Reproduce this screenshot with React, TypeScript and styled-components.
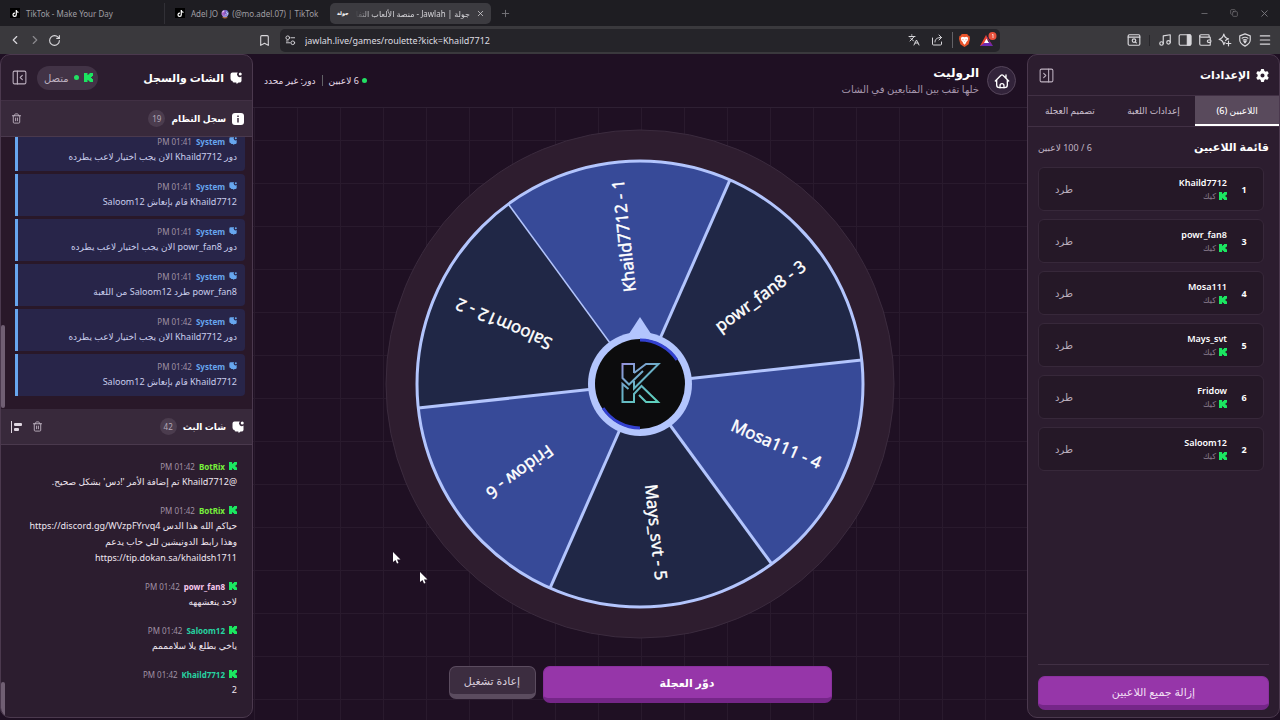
import React from "react";
import styled, { createGlobalStyle } from "styled-components";
import {
  Bookmark, ChevronLeft, ChevronRight, Copy, Languages, Menu, Minus, Music, PanelLeftClose,
  PanelRightClose, Plus, RotateCw, Trash2, Wallet, X,
} from "lucide-react";
import { FaGear, FaTiktok } from "react-icons/fa6";

const GlobalStyle = createGlobalStyle`
  * { box-sizing: border-box; }
  body { margin: 0; background: #1f1023; color: #fff; font-family: "Noto Sans", "DejaVu Sans", sans-serif; }
  button { font: inherit; color: inherit; background: none; border: 0; padding: 0; cursor: pointer; }
  h1, h2, h3, p, ul { margin: 0; padding: 0; }
  ul { list-style: none; }
  svg { display: block; flex: none; }
`;

const Window = styled.div`
  height: 100vh;
  display: flex;
  flex-direction: column;
`;

/* Browser frame */
const TabStrip = styled.div`
  height: 26px;
  flex: none;
  display: flex;
  align-items: center;
  background: #1e1d22;
  color: #a09fa4;
  font-size: 8px;
`;
const Tab = styled.button<{ $last?: boolean }>`
  width: 165px;
  height: 21px;
  padding: 0 10px;
  display: flex;
  align-items: center;
  gap: 6px;
  white-space: nowrap;
  border-right: ${(p) => (p.$last ? "0" : "1px solid #313036")};
`;
const ActiveTab = styled.div`
  width: 161px;
  height: 21px;
  padding: 0 6px 0 7px;
  display: flex;
  align-items: center;
  gap: 6px;
  border-radius: 5px;
  background: #3c3b40;
  color: #d5d4d8;
`;
const Favicon = styled.span`
  width: 10px;
  height: 10px;
  display: grid;
  place-items: center;
  background: #000;
  color: #fff;
`;
const WordIcon = styled.span`
  flex: none;
  font-size: 5px;
  font-weight: 700;
  color: #fff;
`;
const ActiveTitle = styled.span`
  flex: 1;
  min-width: 0;
  overflow: hidden;
  white-space: nowrap;
  mask-image: linear-gradient(to right, transparent, #000 16px);
`;
const NewTab = styled.button`
  margin-left: 9px;
  color: #77767b;
`;
const WindowControls = styled.div`
  margin-left: auto;
  padding-right: 10px;
  display: flex;
  align-items: center;
  gap: 21px;
  color: #7b7a7f;
`;
const Toolbar = styled.div`
  height: 28px;
  flex: none;
  display: grid;
  grid-template-columns: 280px minmax(0, 1fr) 280px;
  align-items: center;
  background: #3a393d;
  color: #d9d8dc;
`;
const NavButtons = styled.div`
  padding: 0 9px 0 8px;
  display: flex;
  gap: 6px;
`;
const ToolButton = styled.button<{ $dim?: boolean; $end?: boolean }>`
  opacity: ${(p) => (p.$dim ? 0.5 : 1)};
  margin-left: ${(p) => (p.$end ? "auto" : "0")};
`;
const UrlBar = styled.div`
  height: 23px;
  padding: 0 3px 0 5px;
  display: flex;
  align-items: center;
  gap: 9px;
  border-radius: 5px;
  background: #252429;
`;
const UrlInput = styled.input`
  flex: 1;
  min-width: 0;
  padding: 0;
  border: 0;
  outline: 0;
  background: none;
  color: #dddce0;
  font: 9px "Noto Sans", sans-serif;
`;
const Divider = styled.span`
  width: 1px;
  height: 11px;
  background: #626166;
`;
const UrlActions = styled.div`
  display: flex;
  align-items: center;
  gap: 11px;
`;
const BraveActions = styled.div`
  padding-left: 6px;
  display: flex;
  align-items: center;
  gap: 10px;
  border-left: 1px solid #626166;
`;
const Extensions = styled.div`
  padding-right: 8px;
  display: flex;
  justify-content: flex-end;
  align-items: center;
  gap: 6px;
`;
const ExtensionDivider = styled(Divider)`
  margin: 0 2px;
  background: #27262a;
`;

/* Game page */
const Game = styled.div`
  flex: 1;
  min-height: 0;
  display: grid;
  grid-template-columns: 253px minmax(0, 1fr) 253px;
  font-size: 10px;
`;
const Panel = styled.aside`
  min-height: 0;
  margin-bottom: 2px;
  display: flex;
  flex-direction: column;
  overflow: hidden;
  border: 1px solid #4b394e;
  border-radius: 10px;
  background: #2c1d2f;
`;
const PanelHeader = styled.header<{ $tall?: boolean }>`
  height: ${(p) => (p.$tall ? 46 : 41)}px;
  flex: none;
  padding: 0 10px;
  display: flex;
  align-items: center;
  justify-content: space-between;
  border-bottom: 1px solid #413044;
`;
const PanelTitle = styled.h2`
  display: flex;
  align-items: center;
  gap: 6px;
  font-size: 11px;
  line-height: 20px;
`;
const Tools = styled.div`
  display: flex;
  align-items: center;
  gap: 9px;
  color: #bdb1c0;
`;
const Connection = styled.span`
  height: 24px;
  padding: 0 5px 0 7px;
  display: flex;
  align-items: center;
  gap: 5px;
  border-radius: 12px;
  background: #423346;
`;
const Dot = styled.i`
  width: 5px;
  height: 5px;
  border-radius: 50%;
  background: #22e063;
`;

const SectionHeader = styled.header`
  height: 36px;
  flex: none;
  padding: 0 8px;
  display: flex;
  align-items: center;
  gap: 6px;
  border-bottom: 1px solid #4a394d;
  background: #38293b;
`;
const SectionTitle = styled.h3`
  font-size: 9px;
`;
const Count = styled.span`
  min-width: 17px;
  height: 17px;
  padding: 0 4px;
  border-radius: 9px;
  background: #4b3c4e;
  color: #b5a9b8;
  font-size: 8px;
  line-height: 17px;
`;
const SectionTools = styled.div`
  margin-right: auto;
  padding-left: 2px;
  display: flex;
  gap: 9px;
  color: #bdb1c0;
`;
const Log = styled.div<{ $system?: boolean }>`
  position: relative;
  flex: ${(p) => (p.$system ? "0 1 272px" : "1 1 0")};
  min-height: 0;
  padding: ${(p) => (p.$system ? "0 7px 13px 14px" : "0 15px 19px")};
  display: flex;
  flex-direction: column;
  justify-content: flex-end;
  gap: ${(p) => (p.$system ? 3 : 12)}px;
  overflow: hidden;
  background: ${(p) => (p.$system ? "#291829" : "transparent")};
`;
const ScrollThumb = styled.i<{ $size: number }>`
  position: absolute;
  left: 0;
  bottom: 1px;
  width: 4px;
  height: ${(p) => p.$size}px;
  border-radius: 2px;
  background: #705f73;
`;
const SystemEntry = styled.article`
  flex: none;
  height: 42px;
  padding: 4px 8px;
  border-left: 3px solid #67a6ee;
  border-radius: 0 4px 4px 0;
  background: #282549;
`;
const ChatEntry = styled.article`
  flex: none;
`;
const Meta = styled.div`
  height: 16px;
  display: flex;
  align-items: center;
  gap: 4px;
  font-size: 8px;
`;
const Sender = styled.strong<{ $color: string }>`
  color: ${(p) => p.$color};
`;
const Time = styled.time`
  color: #a091a4;
`;
const Message = styled.p<{ $soft?: boolean }>`
  font-size: 9px;
  line-height: 16px;
  white-space: pre-line;
  color: ${(p) => (p.$soft ? "#c9cdec" : "#efe6f0")};
`;
const EmoteRow = styled.div`
  height: 16px;
  flex: none;
  padding: 0 2px;
  display: flex;
  align-items: center;
  gap: 10px;
`;
const Emote = styled.i`
  width: 12px;
  height: 12px;
  border: 2px solid #4a3b4e;
  border-radius: 50%;
  background: #170d1a;
`;

/* Centre stage */
const Stage = styled.main`
  position: relative;
  min-width: 0;
  min-height: 0;
  display: flex;
  flex-direction: column;
  background-color: #1f1023;
`;
const StageHeader = styled.header`
  height: 54px;
  flex: none;
  padding: 0 11px;
  display: flex;
  align-items: center;
  gap: 8px;
  border-bottom: 1px solid #2e2033;
  background: #1f1023;
`;
const HomeLink = styled.a`
  width: 29px;
  height: 29px;
  display: grid;
  place-items: center;
  border: 1px solid #55455a;
  border-radius: 50%;
  background: #32233a;
  color: #fff;
`;
const StageTitle = styled.h1`
  font-size: 12px;
  line-height: 16px;
`;
const Subtitle = styled.p`
  font-size: 10px;
  line-height: 16px;
  color: #a696ac;
`;
const Status = styled.div`
  margin-right: auto;
  display: flex;
  align-items: center;
  gap: 6px;
  font-size: 9px;
  color: #e4dae7;
`;
const StatusItem = styled.span`
  display: flex;
  align-items: center;
  gap: 3px;
`;
const Board = styled.div`
  flex: 1;
  min-height: 0;
  padding: 21px 20px 17px;
  display: flex;
  flex-direction: column;
  align-items: center;
  justify-content: space-between;
  background-image:
    linear-gradient(#291a2d 1px, transparent 1px),
    linear-gradient(90deg, #291a2d 1px, transparent 1px);
  background-size: 43px 43px;
  background-position: 0 32px, 44px 0;
`;
const WheelArt = styled.svg`
  width: 100%;
  max-width: 510px;
  min-height: 0;
  flex: 0 1 510px;
`;
const Actions = styled.div`
  width: 100%;
  max-width: 383px;
  display: flex;
  align-items: flex-start;
  gap: 7px;
`;
const ActionButton = styled.button<{ $primary?: boolean }>`
  flex: ${(p) => (p.$primary ? "1" : "0 0 87px")};
  height: ${(p) => (p.$primary ? 37 : 33)}px;
  border: 1px solid ${(p) => (p.$primary ? "#8a319e" : "#5b4c5f")};
  border-bottom: 5px solid ${(p) => (p.$primary ? "#752688" : "#5b4c5f")};
  border-radius: 7px;
  background: ${(p) => (p.$primary ? "#9636a9" : "#3c2d40")};
  font-size: ${(p) => (p.$primary ? 11 : 11)}px;
  font-weight: ${(p) => (p.$primary ? 700 : 400)};
  color: ${(p) => (p.$primary ? "#fff" : "#d9cedc")};
`;
const Pointer = styled.svg<{ $x: number; $y: number }>`
  position: absolute;
  left: ${(p) => p.$x}px;
  top: ${(p) => p.$y}px;
`;

/* Settings panel */
const Tabs = styled.nav`
  height: 31px;
  flex: none;
  display: grid;
  grid-template-columns: repeat(3, 1fr);
  border-bottom: 1px solid #413044;
`;
const SettingsTab = styled.button<{ $active?: boolean }>`
  font-size: 9px;
  font-weight: 500;
  white-space: nowrap;
  color: ${(p) => (p.$active ? "#fff" : "#c9bdcc")};
  background: ${(p) => (p.$active ? "#594a5c" : "transparent")};
  border-bottom: 2px solid ${(p) => (p.$active ? "#fff" : "transparent")};
`;
const PlayersHeader = styled.div`
  height: 40px;
  flex: none;
  padding: 0 10px;
  display: flex;
  align-items: center;
  justify-content: space-between;
`;
const Capacity = styled.span`
  font-size: 9px;
  color: #c0b4c4;
`;
const PlayerList = styled.ul`
  flex: 1;
  min-height: 0;
  margin: 0 10px;
  padding-right: 5px;
  display: flex;
  flex-direction: column;
  gap: 8px;
  overflow: hidden;
  border-bottom: 1px solid #413044;
`;
const PlayerCard = styled.li`
  height: 44px;
  flex: none;
  padding: 0 10px 0 16px;
  display: flex;
  align-items: center;
  gap: 8px;
  border: 1px solid #37283a;
  border-radius: 6px;
  background: #251827;
`;
const Seat = styled.b`
  width: 18px;
  text-align: center;
  font-size: 9px;
`;
const PlayerName = styled.div`
  font-size: 9px;
  font-weight: 600;
  line-height: 14px;
`;
const Platform = styled.div`
  display: flex;
  align-items: center;
  gap: 3px;
  font-size: 8px;
  line-height: 12px;
  color: #8b7d8f;
`;
const KickOut = styled.button`
  margin-right: auto;
  font-size: 10px;
  color: #b9adbc;
`;
const PanelFooter = styled.footer`
  padding: 11px 10px 7px;
`;
const ClearButton = styled(ActionButton)`
  width: 100%;
  height: 34px;
  font-weight: 400;
  color: #f1dff4;
`;

const KickMark = ({ size = 9 }: { size?: number }) => (
  <svg width={size} height={size} viewBox="0 0 9 9" fill="#1be660" aria-hidden="true">
    <path d="M0 0h3.500v2H4.500V1h1V0H9v3H8v1H7v1h1v1h1v3H5.500V8h-1V7h-1v2H0z" />
  </svg>
);

const ChatMark = ({ size = 12, color = "#fff" }: { size?: number; color?: string }) => (
  <svg width={size} height={size} viewBox="0 0 24 24" aria-hidden="true">
    <path fill={color} d="M5 1h10.500a5.500 5.500 0 0 0 7.500 8V18a4 4 0 0 1-4 3h-2l-3.500 3-1-3H8a3 3 0 0 1-3-3l-3-1-1-4V5a4 4 0 0 1 4-4z" />
    <circle cx="20.500" cy="4" r="3" fill={color} />
  </svg>
);

const InfoMark = () => (
  <svg width="12" height="12" viewBox="0 0 12 12" aria-hidden="true">
    <rect width="12" height="12" rx="3" fill="#fff" />
    <path d="M6 2.500v1.500M6 5v4.500" stroke="#38293b" strokeWidth="1.500" />
  </svg>
);

const HomeMark = () => (
  <svg width="16" height="16" viewBox="0 0 24 24" fill="none" stroke="#fff" strokeWidth="2" strokeLinecap="round" strokeLinejoin="round" aria-hidden="true">
    <path d="M2 12 10.500 3.500a2 2 0 0 1 3 0L22 12M4 10.500V18a4 4 0 0 0 4 4h8a4 4 0 0 0 4-4v-7.500M18 7V3" />
    <path d="M9 22v-3a3 3 0 0 1 6 0v3" />
  </svg>
);

const AlignMark = () => (
  <svg width="12" height="12" viewBox="0 0 12 12" fill="#e0d7e2" aria-hidden="true">
    <rect width="1" height="12" />
    <rect x="3" y="2" width="8" height="3" rx="1" />
    <rect x="3" y="7" width="5" height="3" rx="1" />
  </svg>
);

const BraveMark = () => (
  <svg width="11" height="13" viewBox="0 0 12 14" aria-hidden="true">
    <path d="M3 0h6l1 1.500 1.500.5L12 5l-1.500 6L6 14l-4.500-3L0 5l.5-3L2 1.500z" fill="#e9542b" />
    <path d="M2 4l2-1 2 .5L8 3l2 1-.5 3L8 8.500 7.500 10 6 11.500 4.500 10 4 8.500 2.500 7z" fill="#fff" />
    <path d="M3.500 5.500l1.500.5-.5 1zM8.500 5.500 7 6l.5 1zM5.500 8h1L6 9z" fill="#e9542b" />
  </svg>
);

const RewardsMark = () => (
  <svg width="17" height="16" viewBox="0 0 17 16" aria-hidden="true">
    <path d="M6 3 0 14h4l4-7z" fill="#e8442f" />
    <path d="M0 14h13l-3-4H6z" fill="#6a2ab0" />
    <path d="M6 3l7 11-3-3-3-5z" fill="#9c2480" />
    <path d="M6.500 6.500 4 11h5z" fill="#fff" />
    <circle cx="12.500" cy="4" r="4" fill="#e8513c" />
    <path d="M12 3l1-.8V6" stroke="#fff" strokeWidth=".7" fill="none" />
  </svg>
);

const LineIcon = styled.svg`
  fill: none;
  stroke: currentColor;
  stroke-width: 2;
  stroke-linecap: round;
  stroke-linejoin: round;
`;

const ShieldMark = () => (
  <LineIcon width="14" height="14" viewBox="0 0 24 24" aria-hidden="true">
    <path d="M12 1.500 21 5v7c0 5-4 8-9 10.500C7 20 3 17 3 12V5z" />
    <path d="M7 9c3-2 7-2 10 0M9 12c2-1 4-1 6 0" />
    <path d="m10 14 2 3 2-3z" fill="currentColor" />
  </LineIcon>
);
const SiteSettingsMark = () => (
  <LineIcon width="11" height="11" viewBox="0 0 24 24" aria-hidden="true">
    <circle cx="6" cy="6" r="4" /><path d="M13 6h8M3 13h4" />
    <circle cx="17" cy="17" r="4" /><path d="M3 17h8" />
  </LineIcon>
);
const ShareMark = () => (
  <LineIcon width="12" height="12" viewBox="0 0 24 24" aria-hidden="true">
    <path d="M3 8v12a2 2 0 0 0 2 2h14a2 2 0 0 0 2-2v-4" />
    <path d="M8 16c0-6 4-9 13-9M16 2l5 5-5 5" />
  </LineIcon>
);
const TabSearchMark = () => (
  <LineIcon width="14" height="14" viewBox="0 0 24 24" aria-hidden="true">
    <rect x="2" y="3" width="20" height="18" rx="2" /><path d="M2 7h20" />
    <circle cx="12" cy="13" r="3" /><path d="m14 15 2 2" />
  </LineIcon>
);
const SidebarMark = () => (
  <LineIcon width="14" height="14" viewBox="0 0 24 24" aria-hidden="true">
    <rect x="2" y="3" width="20" height="18" rx="2" />
    <path d="M16 3h4a2 2 0 0 1 2 2v14a2 2 0 0 1-2 2h-4z" fill="currentColor" />
  </LineIcon>
);
const AssistantMark = () => (
  <LineIcon width="14" height="14" viewBox="0 0 24 24" aria-hidden="true">
    <path d="M10 2c1 5 3 7 8 8-2 .5-4 1.500-5 3M10 2C9 7 7 9 2 11c5 1 7 4 8 9 .5-2 1-3 2-4" />
    <path d="M18 14v8M14 18h8" />
  </LineIcon>
);

const slices = ["Khaild7712 - 1", "powr_fan8 - 3", "Mosa111 - 4", "Mays_svt - 5", "Fridow - 6", "Saloom12 - 2"];
const startAngle = -96.2;
const at = (deg: number, r: number) => {
  const a = (deg * Math.PI) / 180;
  return `${(Math.cos(a) * r).toFixed(2)} ${(Math.sin(a) * r).toFixed(2)}`;
};

const Wheel = () => (
  <WheelArt viewBox="-255 -255 510 510" role="img" aria-label="عجلة الروليت" direction="ltr">
    <defs>
      <linearGradient id="logo" gradientUnits="userSpaceOnUse" x1="-17" y1="-20" x2="12" y2="18">
        <stop offset="0" stopColor="#9494dc" />
        <stop offset=".5" stopColor="#68b2c6" />
        <stop offset="1" stopColor="#5fd0bd" />
      </linearGradient>
    </defs>
    <circle r="254" fill="#2e1d2f" stroke="#3b2b3e" />
    {slices.map((label, i) => {
      const mid = startAngle + i * 60;
      return (
        <path key={label} d={`M0 0L${at(mid - 30, 223)}A223 223 0 0 1 ${at(mid + 30, 223)}Z`} fill={i % 2 ? "#202746" : "#374a98"} />
      );
    })}
    {slices.map((label, i) => (
      <path key={label} d={`M0 0L${at(startAngle - 30 + i * 60, 223)}`} stroke="#b3c5fd" strokeWidth={i === 0 ? 1.5 : 3} />
    ))}
    <circle r="223" fill="none" stroke="#b3c5fd" strokeWidth="3" />
    {slices.map((label, i) => (
      <text key={label} transform={`rotate(${startAngle + i * 60})`} x="149" y="6" textAnchor="middle" fill="#fff" stroke="#fff" strokeWidth=".4" fontSize="17">
        {label}
      </text>
    ))}
    <path d="M0-67-15-44h30z" fill="#b3c5fd" />
    <circle r="52" fill="#b3c5fd" />
    <circle r="45" fill="#0c0c0d" />
    <path d={`M0-44A44 44 0 0 1 ${at(-33, 44)}M0 44A44 44 0 0 1 ${at(147, 44)}`} fill="none" stroke="#3341d0" strokeWidth="3" />
    <g fill="none" stroke="url(#logo)" strokeWidth="2">
      <path d="M-6-11V-20H-17.500V-6L-11 .5 3-13" />
      <path d="M-6-11 6-20H18.500L-6 4.500V-3" />
      <path d="M-11.500 5-17.500 0V18H-6V10L1.500 2 18 18H6L-1 11" />
    </g>
  </WheelArt>
);

const system = [
  { time: "01:41 PM", text: "دور Khaild7712 الان يجب اختيار لاعب يطرده" },
  { time: "01:41 PM", text: "Khaild7712 قام بإنعاش Saloom12" },
  { time: "01:41 PM", text: "دور powr_fan8 الان يجب اختيار لاعب يطرده" },
  { time: "01:41 PM", text: "powr_fan8 طرد Saloom12 من اللعبة" },
  { time: "01:42 PM", text: "دور Khaild7712 الان يجب اختيار لاعب يطرده" },
  { time: "01:42 PM", text: "Khaild7712 قام بإنعاش Saloom12" },
];
const chat = [
  { name: "BotRix", color: "#78f03c", text: "@Khaild7712 تم إضافة الأمر '!دس' بشكل صحيح." },
  { name: "BotRix", color: "#78f03c", text: "حياكم الله هذا الدس https://discord.gg/WVzpFYrvq4\nوهذا رابط الدونيشين للي حاب يدعم\nhttps://tip.dokan.sa/khaildsh1711" },
  { name: "powr_fan8", color: "#f6c9ee", text: "لاحد ينعشههه" },
  { name: "Saloom12", color: "#27d3a2", text: "ياخي بطلع يلا سلامممم" },
  { name: "Khaild7712", color: "#27d3a2", text: "2" },
];
const players: [number, string][] = [[1, "Khaild7712"], [3, "powr_fan8"], [4, "Mosa111"], [5, "Mays_svt"], [6, "Fridow"], [2, "Saloom12"]];

const BrowserFrame = () => (
  <>
    <TabStrip>
      <Tab><Favicon><FaTiktok size={7} /></Favicon>TikTok - Make Your Day</Tab>
      <Tab $last><Favicon><FaTiktok size={7} /></Favicon>Adel JO 🔮 (@mo.adel.07) | TikTok</Tab>
      <ActiveTab>
        <WordIcon>جولة</WordIcon>
        <ActiveTitle dir="rtl">جولة | Jawlah - منصة الألعاب التفا</ActiveTitle>
        <button aria-label="Close tab"><X size={9} /></button>
      </ActiveTab>
      <NewTab aria-label="New tab"><Plus size={11} /></NewTab>
      <WindowControls>
        <button aria-label="Minimize"><Minus size={9} /></button>
        <button aria-label="Restore"><Copy size={8} /></button>
        <button aria-label="Close"><X size={11} /></button>
      </WindowControls>
    </TabStrip>
    <Toolbar>
      <NavButtons>
        <ToolButton aria-label="Back"><ChevronLeft size={14} /></ToolButton>
        <ToolButton aria-label="Forward" $dim><ChevronRight size={14} /></ToolButton>
        <ToolButton aria-label="Reload"><RotateCw size={13} /></ToolButton>
        <ToolButton aria-label="Bookmark" $end><Bookmark size={13} /></ToolButton>
      </NavButtons>
      <UrlBar>
        <SiteSettingsMark />
        <UrlInput aria-label="Address" defaultValue="jawlah.live/games/roulette?kick=Khaild7712" />
        <UrlActions>
          <Languages size={12} />
          <ShareMark />
        </UrlActions>
        <BraveActions>
          <BraveMark />
          <RewardsMark />
        </BraveActions>
      </UrlBar>
      <Extensions>
        <ToolButton aria-label="Search tabs"><TabSearchMark /></ToolButton>
        <ExtensionDivider />
        <ToolButton aria-label="Media"><Music size={14} /></ToolButton>
        <ToolButton aria-label="Sidebar"><SidebarMark /></ToolButton>
        <ToolButton aria-label="Wallet"><Wallet size={14} /></ToolButton>
        <ToolButton aria-label="Assistant"><AssistantMark /></ToolButton>
        <ToolButton aria-label="VPN"><ShieldMark /></ToolButton>
        <ToolButton aria-label="Menu"><Menu size={14} /></ToolButton>
      </Extensions>
    </Toolbar>
  </>
);

const cursorPath = "M1 1v10l2.500-2 1.500 3.500 1.500-.5L5 8.500h3.500z";

export default function App() {
  return (
    <Window>
      <GlobalStyle />
      <BrowserFrame />
      <Game dir="rtl">
        <Panel>
          <PanelHeader>
            <PanelTitle><FaGear size={13} />الإعدادات</PanelTitle>
            <Tools><button aria-label="إغلاق الإعدادات"><PanelRightClose size={17} strokeWidth={1.500} /></button></Tools>
          </PanelHeader>
          <Tabs>
            <SettingsTab $active>اللاعبين (6)</SettingsTab>
            <SettingsTab>إعدادات اللعبة</SettingsTab>
            <SettingsTab>تصميم العجلة</SettingsTab>
          </Tabs>
          <PlayersHeader>
            <PanelTitle as="h3">قائمة اللاعبين</PanelTitle>
            <Capacity>6 / 100 لاعبين</Capacity>
          </PlayersHeader>
          <PlayerList>
            {players.map(([seat, name]) => (
              <PlayerCard key={seat}>
                <Seat>{seat}</Seat>
                <div>
                  <PlayerName>{name}</PlayerName>
                  <Platform><KickMark size={8} />كيك</Platform>
                </div>
                <KickOut>طرد</KickOut>
              </PlayerCard>
            ))}
          </PlayerList>
          <PanelFooter><ClearButton $primary>إزالة جميع اللاعبين</ClearButton></PanelFooter>
        </Panel>

        <Stage>
          <StageHeader>
            <HomeLink href="/" aria-label="الرئيسية"><HomeMark /></HomeLink>
            <div>
              <StageTitle>الروليت</StageTitle>
              <Subtitle>خلها تقب بين المتابعين في الشات</Subtitle>
            </div>
            <Status>
              <StatusItem><Dot />6 لاعبين</StatusItem>
              <Divider />
              <span>دور: غير محدد</span>
            </Status>
          </StageHeader>
          <Board>
            <Wheel />
            <Actions>
              <ActionButton $primary>دوّر العجلة</ActionButton>
              <ActionButton>إعادة تشغيل</ActionButton>
            </Actions>
          </Board>
          <Pointer $x={139} $y={497} width="10" height="14" viewBox="0 0 10 14"><path d={cursorPath} fill="#fff" /></Pointer>
          <Pointer $x={166} $y={517} width="10" height="14" viewBox="0 0 10 14"><path d={cursorPath} fill="#fff" /></Pointer>
        </Stage>

        <Panel>
          <PanelHeader $tall>
            <PanelTitle><ChatMark />الشات والسجل</PanelTitle>
            <Tools>
              <Connection><KickMark /><Dot />متصل</Connection>
              <button aria-label="إغلاق الشات"><PanelLeftClose size={17} strokeWidth={1.500} /></button>
            </Tools>
          </PanelHeader>
          <SectionHeader>
            <InfoMark />
            <SectionTitle>سجل النظام</SectionTitle>
            <Count>19</Count>
            <SectionTools><button aria-label="مسح السجل"><Trash2 size={11} /></button></SectionTools>
          </SectionHeader>
          <Log $system>
            {system.map((entry, i) => (
              <SystemEntry key={i}>
                <Meta><ChatMark size={8} color="#67a6ee" /><Sender $color="#67a6ee">System</Sender><Time>{entry.time}</Time></Meta>
                <Message $soft>{entry.text}</Message>
              </SystemEntry>
            ))}
            <ScrollThumb $size={83} />
          </Log>
          <SectionHeader>
            <ChatMark />
            <SectionTitle>شات البث</SectionTitle>
            <Count>42</Count>
            <SectionTools>
              <button aria-label="مسح الشات"><Trash2 size={11} /></button>
              <button aria-label="محاذاة"><AlignMark /></button>
            </SectionTools>
          </SectionHeader>
          <Log>
            <EmoteRow>{[0, 1, 2, 3, 4, 5].map((n) => <Emote key={n} />)}</EmoteRow>
            {chat.map((entry, i) => (
              <ChatEntry key={i}>
                <Meta><KickMark size={8} /><Sender $color={entry.color}>{entry.name}</Sender><Time>01:42 PM</Time></Meta>
                <Message>{entry.text}</Message>
              </ChatEntry>
            ))}
            <ScrollThumb $size={34} />
          </Log>
        </Panel>
      </Game>
    </Window>
  );
}
